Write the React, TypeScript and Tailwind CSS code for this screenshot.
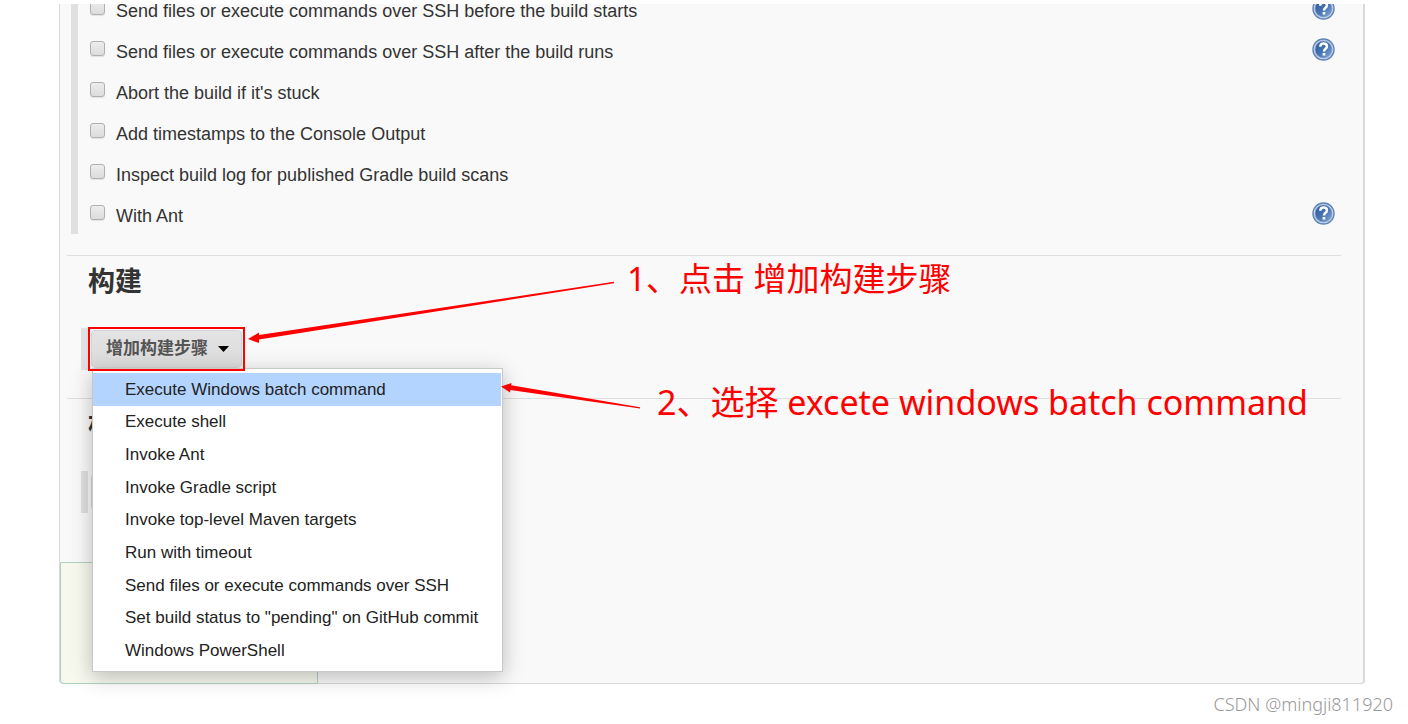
import React from "react";

const environmentOptions = [
  { label: "Send files or execute commands over SSH before the build starts", help: true },
  { label: "Send files or execute commands over SSH after the build runs", help: true },
  { label: "Abort the build if it's stuck", help: false },
  { label: "Add timestamps to the Console Output", help: false },
  { label: "Inspect build log for published Gradle build scans", help: false },
  { label: "With Ant", help: true },
];

const buildSteps = [
  "Execute Windows batch command",
  "Execute shell",
  "Invoke Ant",
  "Invoke Gradle script",
  "Invoke top-level Maven targets",
  "Run with timeout",
  "Send files or execute commands over SSH",
  'Set build status to "pending" on GitHub commit',
  "Windows PowerShell",
];

function HelpIcon() {
  return (
    <svg viewBox="0 0 24 24" className="size-[23px]" aria-hidden="true">
      <defs>
        <linearGradient id="help-fill" x1="0" y1="0" x2="1" y2="1">
          <stop offset="0" stopColor="#2f5a9b" />
          <stop offset="0.5" stopColor="#4572b0" />
          <stop offset="1" stopColor="#85aad8" />
        </linearGradient>
      </defs>
      <circle cx="12" cy="12" r="11" fill="#c5d4ea" stroke="#6184b5" strokeWidth="1.4" />
      <circle cx="12" cy="12" r="8.8" fill="url(#help-fill)" stroke="#7f9fcb" strokeWidth="0.8" />
      <path
        d="M8.6 9.2C8.7 6.9 10 5.8 12.1 5.8C14.3 5.8 15.6 7 15.6 8.8C15.6 11.2 12.5 11.2 12.5 14"
        fill="none"
        stroke="#fff"
        strokeWidth="2.5"
      />
      <rect x="11.1" y="15.6" width="2.8" height="2.7" fill="#fff" />
    </svg>
  );
}

function OptionRow({ label, help, index }: { label: string; help: boolean; index: number }) {
  const id = `option-${index}`;
  return (
    <li className="flex h-[41px] items-center pr-7 pl-3">
      <input
        id={id}
        type="checkbox"
        className="mb-[3px] size-[15px] shrink-0 appearance-none rounded-[3px] border border-[#b0b0b0] bg-linear-to-b from-[#ededed] to-[#dcdcdc] shadow-[0_1px_1px_#00000018]"
      />
      <label htmlFor={id} className="ml-[11px] pt-1 text-[18px] leading-6 text-[#333]">
        {label}
      </label>
      {help && (
        <button type="button" aria-label={`Help: ${label}`} className="ml-auto">
          <HelpIcon />
        </button>
      )}
    </li>
  );
}

function StepSection({ title, action, children }: { title: string; action: string; children?: React.ReactNode }) {
  return (
    <section className="mr-[22px] ml-[7px] border-t border-[#dfdfdf] pt-[6px] pb-7">
      <h2 className="ml-[21px] h-10 text-[27px] leading-10 font-bold text-[#333]">{title}</h2>
      <div className="relative mt-[26px] ml-[14px] flex h-[42px] w-fit items-center border-l-[7px] border-[#e0e0e0] pl-[3px]">
        <button
          type="button"
          className="flex h-[38px] items-center gap-[10px] rounded-[4px] border border-[#d4d4d4] bg-linear-to-b from-[#e3e3e3] to-[#dcdcdc] pr-3 pl-[14px] text-[17px] leading-6 font-bold text-[#555]"
        >
          {action}
          <svg viewBox="0 0 10 6" className="h-[6px] w-[11px]" preserveAspectRatio="none" aria-hidden="true">
            <path d="M0 0H10L5 6Z" fill="#000" />
          </svg>
        </button>
        {children}
      </div>
    </section>
  );
}

function StepMenu() {
  return (
    <ul
      role="menu"
      className="absolute top-10 left-[4px] z-10 grid h-[304px] w-[411px] grid-rows-9 border border-[#c8c8c8] bg-white py-1 pr-px shadow-[0_5px_20px_#00000040]"
    >
      {buildSteps.map((step, i) => (
        <li key={step} role="none" className={i === 0 ? "bg-[#b3d4ff]" : ""}>
          <button
            type="button"
            role="menuitem"
            className="flex size-full items-center pt-px pl-8 text-left text-[17px] leading-6 whitespace-nowrap text-[#222]"
          >
            {step}
          </button>
        </li>
      ))}
    </ul>
  );
}

export default function App() {
  return (
    <div className="overflow-hidden bg-white pt-1 font-['Liberation_Sans','Noto_Sans_CJK_SC',sans-serif]">
      <main className="relative mr-[43px] ml-[59px] rounded-b-[4px] border-r-2 border-b border-l border-[#d9d9d9] bg-[#f9f9f9]">
        <div className="mb-[21px] ml-[11px] overflow-hidden border-l-[7px] border-[#e0e0e0]">
          <ul className="-mt-4">
            {environmentOptions.map((option, i) => (
              <OptionRow key={option.label} index={i} {...option} />
            ))}
          </ul>
        </div>

        <StepSection title="构建" action="增加构建步骤">
          <div className="pointer-events-none absolute -top-px -right-[3px] -bottom-px left-0 z-20 border-2 border-[#f00]" />
          <StepMenu />
        </StepSection>
        <StepSection title="构建后操作" action="增加构建后操作步骤" />

        <div className="mt-[21px] -mb-px h-[122px] w-[258px] rounded-bl-[4px] border border-[#b0d0be] bg-[#f7f8ee]" />

        <svg viewBox="0 0 400 140" className="pointer-events-none absolute top-[270px] left-[186px] z-20 h-[140px] w-[400px]" aria-hidden="true">
          <path d="M2 65L13 58.5L13 61L368 7.8L368 9.2L13 65.4L13 69Z" fill="#f00" />
          <path d="M255 112.5L265.5 109L265.2 111.2L394 133.2L394 134.4L264.4 116L264 118.6Z" fill="#f00" />
        </svg>
        <p className="absolute top-[251px] left-[567px] z-20 font-['Noto_Sans','Noto_Sans_CJK_SC',sans-serif] text-[33px] leading-12 whitespace-nowrap text-[#f00]">
          1、点击 增加构建步骤
        </p>
        <p className="absolute top-[374px] left-[597px] z-20 font-['Noto_Sans','Noto_Sans_CJK_SC',sans-serif] text-[34px] leading-12 whitespace-nowrap text-[#f00]">
          2、选择 excete windows batch command
        </p>
      </main>
      <footer className="mt-2 pr-[15px] pb-2 text-right font-['Noto_Sans',sans-serif] text-[18px] leading-6 font-light text-[#999]">
        CSDN @mingji811920
      </footer>
    </div>
  );
}
